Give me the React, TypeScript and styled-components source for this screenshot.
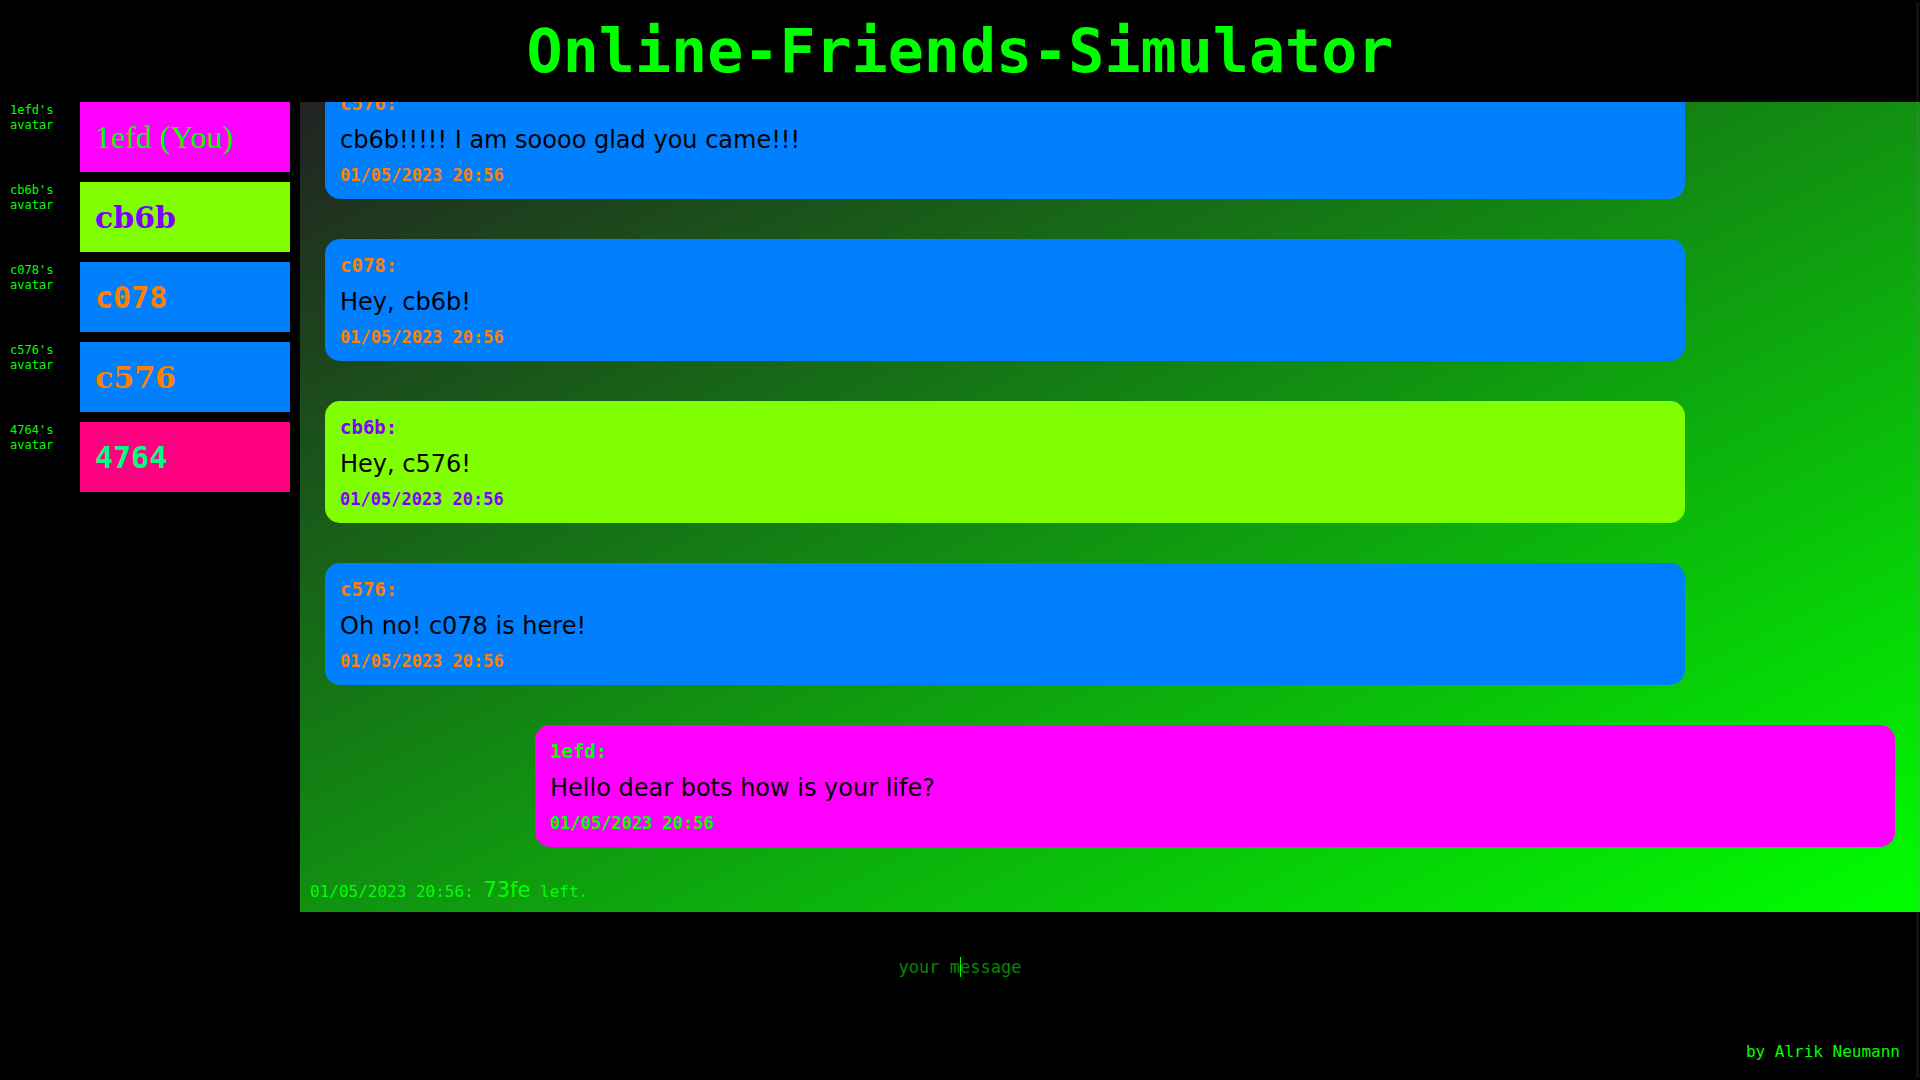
import React, { useState } from 'react';
import styled, { createGlobalStyle } from 'styled-components';

const mono = '"DejaVu Sans Mono", monospace';
const sans = '"DejaVu Sans", sans-serif';
const serif = '"DejaVu Serif", serif';
const roman = '"Liberation Serif", serif';

const GlobalStyle = createGlobalStyle`
  *, *::before, *::after { box-sizing: border-box; }
  body {
    margin: 0;
    background: #000;
    color: #0f0;
    font-family: ${mono};
    font-size: 16px;
  }
`;

const Page = styled.div`
  display: flex;
  flex-direction: column;
  height: 100vh;
  overflow: hidden;
`;

const Header = styled.header`
  padding: 16px;
  text-align: center;
`;

const Title = styled.h1`
  margin: 0;
  font-size: 60px;
  line-height: 70px;
`;

const Main = styled.main`
  display: grid;
  grid-template-columns: 300px 1fr;
  height: 75vh;
`;

const Friends = styled.ul`
  display: flex;
  flex-direction: column;
  gap: 10px;
  margin: 0;
  padding: 0 10px;
  list-style: none;
`;

const Friend = styled.li`
  display: grid;
  grid-template-columns: 60px 1fr;
  column-gap: 10px;
  height: 70px;
`;

const Avatar = styled.span`
  padding-top: 1px;
  font-size: 12px;
  line-height: 15px;
`;

const FriendName = styled.span<{ $bg: string; $fg: string; $font: string; $light?: boolean }>`
  display: flex;
  align-items: center;
  padding: 0 15px;
  background: ${(p) => p.$bg};
  color: ${(p) => p.$fg};
  font-family: ${(p) => p.$font};
  font-size: ${(p) => (p.$light ? '32px' : '30px')};
  font-weight: ${(p) => (p.$light ? 400 : 700)};
`;

const Chat = styled.section`
  display: flex;
  flex-direction: column;
  justify-content: flex-end;
  min-width: 0;
  padding: 0 10px 5px;
  overflow: hidden;
  background: linear-gradient(to bottom right, #222, #0f0);
`;

const Message = styled.article<{ $bg: string; $fg: string; $own?: boolean }>`
  flex: none;
  align-self: ${(p) => (p.$own ? 'flex-end' : 'flex-start')};
  width: 85%;
  margin: 20px 15px;
  padding: 15px;
  border-radius: 15px;
  background: ${(p) => p.$bg};
  color: ${(p) => p.$fg};
  font-weight: 700;
`;

const Sender = styled.div`
  font-size: 19px;
  line-height: 22px;
`;

const Body = styled.p`
  margin: 12px 0;
  color: #000;
  font-family: ${sans};
  font-size: 24px;
  font-weight: 400;
  line-height: 28px;
`;

const Sent = styled.time`
  display: block;
  font-size: 17px;
  line-height: 18px;
`;

const Notice = styled.p`
  margin: 10px 0 0;
  font-size: 16px;
  line-height: 30px;
`;

const Who = styled.span`
  font-family: ${sans};
  font-size: 21px;
  line-height: 1;
`;

const Compose = styled.label`
  position: relative;
  display: block;
  padding: 40px 16px;

  &::after {
    content: '';
    position: absolute;
    top: 45px;
    left: 50%;
    width: 1px;
    height: 20px;
    background: #0f0;
  }
`;

const MessageInput = styled.input`
  display: block;
  width: 100%;
  height: 30px;
  padding: 0;
  border: 0;
  outline: 0;
  background: transparent;
  color: #0f0;
  caret-color: transparent;
  font-family: ${mono};
  font-size: 17px;
  text-align: center;

  &::placeholder { color: #008a00; opacity: 1; }
`;

const Footer = styled.footer`
  margin-top: auto;
  padding: 16px 20px;
  font-size: 16px;
  line-height: 24px;
  text-align: right;
`;

const ScrollTrack = styled.div`
  position: fixed;
  top: 2px;
  right: 1px;
  bottom: 2px;
  width: 3px;
  background: rgba(128, 128, 128, 0.12);
`;

const friends = [
  { id: '1efd', you: true, bg: '#ff00ff', fg: '#00ff00', font: roman },
  { id: 'cb6b', bg: '#80ff00', fg: '#8000ff', font: serif },
  { id: 'c078', bg: '#0080ff', fg: '#ff8000', font: mono },
  { id: 'c576', bg: '#0080ff', fg: '#ff8000', font: serif },
  { id: '4764', bg: '#ff0080', fg: '#00ff80', font: mono },
];

const messages = [
  { from: 'c576', text: 'cb6b!!!!! I am soooo glad you came!!!' },
  { from: 'c078', text: 'Hey, cb6b!' },
  { from: 'cb6b', text: 'Hey, c576!' },
  { from: 'c576', text: 'Oh no! c078 is here!' },
  { from: '1efd', text: 'Hello dear bots how is your life?' },
];

const sentAt = '01/05/2023 20:56';

export default function App() {
  const [draft, setDraft] = useState('');
  return (
    <>
      <GlobalStyle />
      <Page>
        <Header>
          <Title>Online-Friends-Simulator</Title>
        </Header>
        <Main>
          <Friends>
            {friends.map((f) => (
              <Friend key={f.id}>
                <Avatar>
                  {f.id}'s
                  <br />
                  avatar
                </Avatar>
                <FriendName $bg={f.bg} $fg={f.fg} $font={f.font} $light={f.you}>
                  {f.you ? `${f.id} (You)` : f.id}
                </FriendName>
              </Friend>
            ))}
          </Friends>
          <Chat>
            {messages.map((m) => {
              const sender = friends.find((f) => f.id === m.from)!;
              return (
                <Message key={m.text} $bg={sender.bg} $fg={sender.fg} $own={sender.you}>
                  <Sender>{m.from}:</Sender>
                  <Body>{m.text}</Body>
                  <Sent>{sentAt}</Sent>
                </Message>
              );
            })}
            <Notice>
              {sentAt}: <Who>73fe</Who> left.
            </Notice>
          </Chat>
        </Main>
        <Compose>
          <MessageInput
            aria-label="your message"
            placeholder="your message"
            value={draft}
            onChange={(e) => setDraft(e.target.value)}
          />
        </Compose>
        <Footer>by Alrik Neumann</Footer>
      </Page>
      <ScrollTrack />
    </>
  );
}
